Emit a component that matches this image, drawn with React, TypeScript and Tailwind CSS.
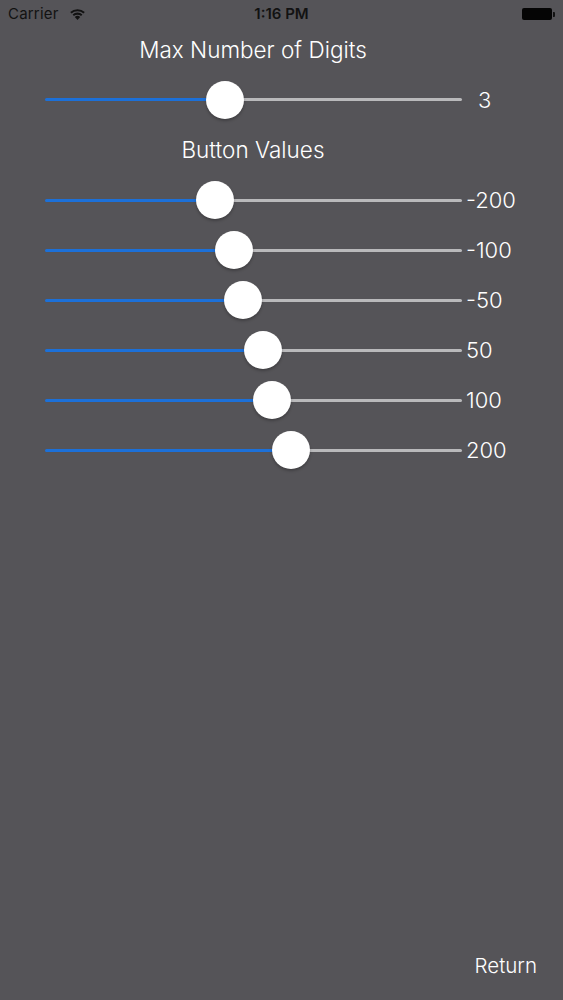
import React from "react";

const font = { fontFamily: "Inter, Roboto, 'Liberation Sans', sans-serif" };

function Slider({ x, label, labelMl }: { x: number; label: string; labelMl: string }) {
  const w = 417;
  const pos = x - 45;
  return (
    <div className="flex items-center h-[50px]">
      <div className="ml-[45px] w-[417px] relative h-full flex items-center">
        <div className="h-[3px] bg-[#1c70d8] rounded-l-full" style={{ width: pos }} />
        <div className="h-[3px] bg-[#b9b9bb] rounded-r-full" style={{ width: w - pos }} />
        <div
          className="absolute top-1/2 w-[38px] h-[38px] -mt-[19px] rounded-full bg-white shadow-[0_2px_3px_rgba(0,0,0,0.25)]"
          style={{ left: pos - 19 }}
        />
      </div>
      <span className={`${labelMl} text-[22px] text-white leading-none font-light`}>{label}</span>
    </div>
  );
}

export default function App() {
  return (
    <div className="min-h-screen w-full bg-[#555458] flex flex-col text-white" style={font}>
      {/* status bar */}
      <div className="h-[28px] relative flex items-center pl-[8px] pr-[8px] text-[#121212]">
        <span className="text-[15px] tracking-[0.2px]">Carrier</span>
        <svg className="ml-[10px]" width="17" height="12" viewBox="0 0 17 12">
          <path d="M8.5 12 L5.8 8.9 A4 4 0 0 1 11.2 8.9 Z" fill="#121212" />
          <path d="M3.6 6.6 A7 7 0 0 1 13.4 6.6 L12.1 8.1 A5.2 5.2 0 0 0 4.9 8.1 Z" fill="#121212" />
          <path d="M1.2 4.1 A10.5 10.5 0 0 1 15.8 4.1 L14.5 5.6 A8.6 8.6 0 0 0 2.5 5.6 Z" fill="#121212" />
        </svg>
        <span className="absolute left-1/2 -translate-x-1/2 text-[15px] font-semibold">1:16 PM</span>
        <div className="ml-auto flex items-center">
          <div className="w-[30px] h-[12px] bg-[#050505] rounded-[2px]" />
          <div className="w-[2px] h-[5px] bg-[#121212] ml-[1px] rounded-r-[1px]" />
        </div>
      </div>

      <div className="h-[44px] flex items-center justify-center">
        <span className="text-[22.5px] font-light ml-[-57px]">Max Number of Digits</span>
      </div>
      <div className="h-[55px] flex items-center">
        <div className="w-full">
          <Slider x={225} label="3" labelMl="ml-[16px]" />
        </div>
      </div>
      <div className="h-[48px] flex items-center justify-center">
        <span className="text-[22.5px] font-light ml-[-57px] -mt-[2px]">Button Values</span>
      </div>
      <Slider x={215} label="-200" labelMl="ml-[4px]" />
      <Slider x={234} label="-100" labelMl="ml-[4px]" />
      <Slider x={243} label="-50" labelMl="ml-[4px]" />
      <Slider x={263} label="50" labelMl="ml-[4px]" />
      <Slider x={272} label="100" labelMl="ml-[4px]" />
      <Slider x={291} label="200" labelMl="ml-[4px]" />

      <div className="flex-1" />
      <div className="flex justify-end pr-[26px] pb-[18px]">
        <span className="text-[20.5px] font-light">Return</span>
      </div>
    </div>
  );
}
